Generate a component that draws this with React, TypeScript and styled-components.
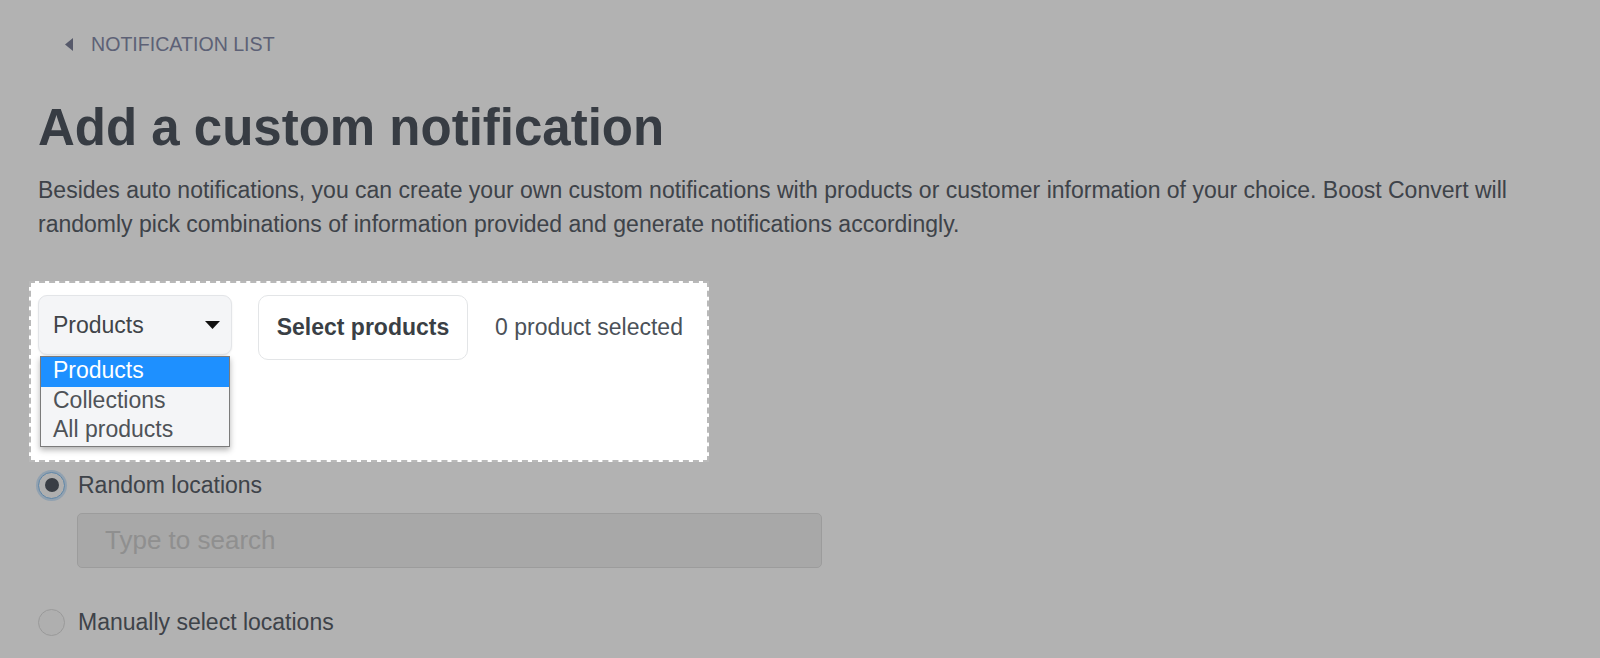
import React from "react";
import styled, { createGlobalStyle } from "styled-components";

const GlobalStyle = createGlobalStyle`
  html, body { margin: 0; padding: 0; background: #ffffff; }
  body {
    font-family: "Liberation Sans", Arial, Helvetica, sans-serif;
    overflow: hidden;
  }
  * { box-sizing: border-box; }
`;

const Page = styled.main`
  padding: 32px 38px 0 38px;
  min-height: 658px;
`;

const BackLink = styled.a`
  display: flex;
  align-items: center;
  gap: 18px;
  margin: 1px 0 0 27px;
  height: 22px;
  font-size: 19.6px;
  line-height: 22px;
  color: #868caa;
  text-transform: uppercase;
  text-decoration: none;
`;

const Title = styled.h1`
  margin: 42px 0 0 0;
  font-size: 51px;
  line-height: 62px;
  font-weight: 700;
  color: #505761;
`;

const Intro = styled.p`
  margin: 14px 0 0 0;
  font-size: 23px;
  line-height: 34px;
  color: #596069;
`;

const Spotlight = styled.section`
  position: relative;
  z-index: 2;
  margin: 40px 0 0 -9px;
  width: 680px;
  height: 181px;
  padding: 12px 0 0 7px;
  background: #ffffff;
  border: 2px dashed #b9b9b9;
  box-shadow: 0 0 0 3000px rgba(0, 0, 0, 0.3);
`;

const PickerRow = styled.div`
  display: flex;
  align-items: flex-start;
  gap: 26px;
`;

const SelectWrap = styled.div`
  position: relative;
  width: 194px;
  height: 60px;
`;

const SelectBox = styled.div`
  display: flex;
  align-items: center;
  justify-content: space-between;
  height: 100%;
  padding: 0 11px 0 14px;
  background: #f4f5f7;
  border: 1px solid #e3e5e8;
  border-radius: 9px;
  box-shadow: 0 1px 2px rgba(0, 0, 0, 0.08);
  font-size: 23px;
  color: #404449;
`;

const OptionList = styled.ul`
  position: absolute;
  z-index: 1;
  top: calc(100% + 1px);
  left: 2px;
  width: 190px;
  margin: 0;
  padding: 0;
  list-style: none;
  background: #f4f5f7;
  border: 1px solid #7b7b7b;
  box-shadow: 0 3px 6px rgba(0, 0, 0, 0.3);
`;

const Option = styled.li<{ $active?: boolean }>`
  height: 29.6px;
  padding: 2px 0 4px 12px;
  font-size: 23px;
  line-height: 23px;
  background: ${(p) => (p.$active ? "#1e90ff" : "transparent")};
  color: ${(p) => (p.$active ? "#ffffff" : "#4f5358")};
  display: flex;
  align-items: center;
`;

const PickButton = styled.button`
  width: 210px;
  height: 65px;
  padding: 0;
  background: #ffffff;
  border: 1px solid #e3e5e7;
  border-radius: 10px;
  font-family: inherit;
  font-size: 23px;
  font-weight: 700;
  color: #3a3f45;
`;

const Count = styled.span`
  align-self: center;
  margin-left: 1px;
  font-size: 23px;
  color: #4b5158;
`;

const RadioRow = styled.label<{ $gap?: number }>`
  display: flex;
  align-items: center;
  gap: 13px;
  height: 30px;
  margin: ${(p) => p.$gap ?? 0}px 0 0 0;
  font-size: 23px;
  color: #596069;
`;

const RadioDot = styled.span<{ $checked?: boolean }>`
  display: flex;
  align-items: center;
  justify-content: center;
  width: 27px;
  height: 27px;
  border-radius: 50%;
  background: #fbfbfb;
  border: 1px solid ${(p) => (p.$checked ? "#86bff0" : "#dcdcdc")};
  box-shadow: ${(p) => (p.$checked ? "0 0 0 2px rgba(120, 185, 245, 0.35)" : "none")};

  &::after {
    content: "";
    display: ${(p) => (p.$checked ? "block" : "none")};
    width: 14px;
    height: 14px;
    border-radius: 50%;
    background: #535a63;
  }
`;

const SearchInput = styled.input`
  display: block;
  width: 745px;
  height: 55px;
  margin: 13px 0 0 39px;
  padding: 0 0 0 27px;
  background: #f1f1f1;
  border: 1px solid #e0e0e0;
  border-radius: 5px;
  font-family: inherit;
  font-size: 26px;
  color: #596069;
  outline: none;

  &::placeholder {
    color: #cdcdcd;
  }
`;

export default function App() {
  return (
    <>
      <GlobalStyle />
      <Page>
        <BackLink href="#">
          <svg width="8" height="13" viewBox="0 0 8 13" aria-hidden="true">
            <path d="M8 0 L0 6.5 L8 13 Z" fill="#7b8098" />
          </svg>
          Notification list
        </BackLink>
        <Title>Add a custom notification</Title>
        <Intro>
          Besides auto notifications, you can create your own custom notifications with products or
          customer information of your choice. Boost Convert will randomly pick combinations of
          information provided and generate notifications accordingly.
        </Intro>

        <Spotlight>
          <PickerRow>
            <SelectWrap>
              <SelectBox>
                <span>Products</span>
                <svg width="15" height="8" viewBox="0 0 15 8" aria-hidden="true">
                  <path d="M0 0 L15 0 L7.5 8 Z" fill="#111111" />
                </svg>
              </SelectBox>
              <OptionList>
                <Option $active>Products</Option>
                <Option>Collections</Option>
                <Option>All products</Option>
              </OptionList>
            </SelectWrap>
            <PickButton>Select products</PickButton>
            <Count>0 product selected</Count>
          </PickerRow>
        </Spotlight>

        <RadioRow $gap={8}>
          <RadioDot $checked />
          Random locations
        </RadioRow>
        <SearchInput placeholder="Type to search" />
        <RadioRow $gap={39}>
          <RadioDot />
          Manually select locations
        </RadioRow>
      </Page>
    </>
  );
}
